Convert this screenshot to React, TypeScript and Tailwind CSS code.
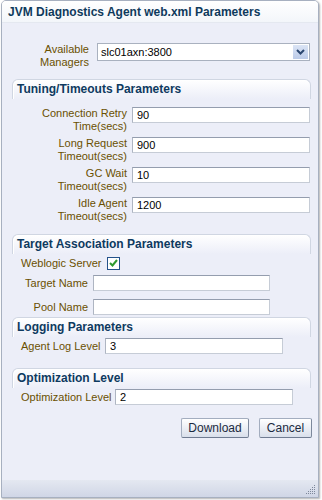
import { useState } from 'react';

function Field({ value, w }: { value: string; w: string }) {
  return (
    <input
      defaultValue={value}
      className={`${w} h-[16px] shrink-0 border border-[#c6ccd6] border-t-[#949dae] border-l-[#aeb5c2] bg-white pl-[4px] text-[11px] text-black outline-none`}
    />
  );
}

function PanelHeader({ title }: { title: string }) {
  return (
    <div className="h-[20px] rounded-t-[6px] border-x border-t border-[#d0d6e2] bg-gradient-to-b from-white to-[#eceef8] pl-[4px] text-[12px] font-bold leading-[19px] text-[#0e3a60] shadow-[inset_1px_1px_0_#ffffff]">
      {title}
    </div>
  );
}

const tuning = [
  ['Connection Retry', 'Time(secs)', '90'],
  ['Long Request', 'Timeout(secs)', '900'],
  ['GC Wait', 'Timeout(secs)', '10'],
  ['Idle Agent', 'Timeout(secs)', '1200'],
];

function Button({ label, w }: { label: string; w: string }) {
  return (
    <button className={`${w} h-[20px] rounded-[2px] border border-[#a3adbf] border-b-[#6f7b91] border-r-[#7d889c] bg-gradient-to-b from-white to-[#d9dfeb] text-[12px] text-[#1b2a40]`}>
      {label}
    </button>
  );
}

export default function App() {
  const [weblogic, setWeblogic] = useState(true);
  return (
    <div className="w-[322px] h-[500px] bg-white font-['Liberation_Sans',Arial,sans-serif] text-[11px] text-[#6a5000]">
      <div className="ml-px w-[318px] h-[498px] flex flex-col rounded-t-[5px] border border-[#a7b0c0] bg-[#eceef8] shadow-[1px_1px_2px_rgba(0,0,0,0.3)] overflow-hidden">
        <div className="h-[22px] shrink-0 border-b border-[#e4e8f0] bg-gradient-to-b from-white to-[#f3f6fa] pl-[6px] text-[12px] font-bold leading-[22px] text-[#0f3a5c]">
          JVM Diagnostics Agent web.xml Parameters
        </div>

        <div className="mt-[20px] flex items-start gap-[8px]">
          <div className="w-[87px] text-right leading-[13px]">
            Available
            <br />
            Managers
          </div>
          <div className="w-[213px] h-[18px] flex items-center justify-between border border-[#a9b1bf] bg-white pl-[3px] pr-[1px] text-black">
            <span>slc01axn:3800</span>
            <span className="w-[15px] h-[14px] flex items-center justify-center bg-gradient-to-b from-[#dbe4f5] to-[#bccbe8]">
              <svg width="9" height="6" viewBox="0 0 9 6">
                <path d="M1 1 L4.5 4.5 L8 1" stroke="#2c4770" strokeWidth="2" fill="none" />
              </svg>
            </span>
          </div>
        </div>

        <div className="ml-[10px] w-[299px] mt-[10px]">
          <PanelHeader title="Tuning/Timeouts Parameters" />
          <div className="pt-[8px] flex flex-col gap-[4px]">
            {tuning.map(([a, b, v]) => (
              <div key={a} className="flex items-start gap-[5px]">
                <div className="w-[115px] text-right leading-[13px]">
                  {a}
                  <br />
                  {b}
                </div>
                <Field value={v} w="w-[178px]" />
              </div>
            ))}
          </div>
        </div>

        <div className="ml-[10px] w-[299px] mt-[11px]">
          <PanelHeader title="Target Association Parameters" />
          <div className="mt-[2px] h-[14px] flex items-center pl-[9px]">
            <span className="w-[86px]">Weblogic Server</span>
            <button
              onClick={() => setWeblogic(!weblogic)}
              className="w-[13px] h-[13px] flex items-center justify-center border border-[#24528a] bg-white"
            >
              {weblogic && (
                <svg width="9" height="8" viewBox="0 0 9 8">
                  <path d="M1 4 L3.5 6.5 L8 1" stroke="#2f9a2f" strokeWidth="2" fill="none" />
                </svg>
              )}
            </button>
          </div>
          <div className="mt-[5px] flex items-center gap-[5px]">
            <span className="w-[76px] text-right">Target Name</span>
            <Field value="" w="w-[177px]" />
          </div>
          <div className="mt-[7px] flex items-center gap-[5px]">
            <span className="w-[76px] text-right">Pool Name</span>
            <Field value="" w="w-[177px]" />
          </div>
        </div>

        <div className="ml-[10px] w-[299px] mt-[2px]">
          <PanelHeader title="Logging Parameters" />
          <div className="mt-[1px] flex items-center pl-[9px]">
            <span className="w-[84px]">Agent Log Level</span>
            <Field value="3" w="w-[178px]" />
          </div>
        </div>

        <div className="ml-[10px] w-[299px] mt-[13px]">
          <PanelHeader title="Optimization Level" />
          <div className="mt-[1px] flex items-center pl-[9px]">
            <span className="w-[94px]">Optimization Level</span>
            <Field value="2" w="w-[178px]" />
          </div>
        </div>

        <div className="mt-[13px] mr-[6px] flex justify-end gap-[10px]">
          <Button label="Download" w="w-[68px]" />
          <Button label="Cancel" w="w-[53px]" />
        </div>

        <div className="mt-auto h-[17px] shrink-0 flex items-end justify-end bg-gradient-to-b from-[#e4e8f1] to-[#d0d6e6] pr-[2px] pb-[2px]">
          <svg width="10" height="10" viewBox="0 0 10 10">
            {[
              [8, 0], [6, 2], [8, 2], [4, 4], [6, 4], [8, 4], [2, 6], [4, 6], [6, 6], [8, 6], [0, 8], [2, 8], [4, 8], [6, 8], [8, 8],
            ].map(([x, y]) => (
              <rect key={`${x}-${y}`} x={x} y={y} width="1" height="1" fill="#7d879a" />
            ))}
          </svg>
        </div>
      </div>
    </div>
  );
}
